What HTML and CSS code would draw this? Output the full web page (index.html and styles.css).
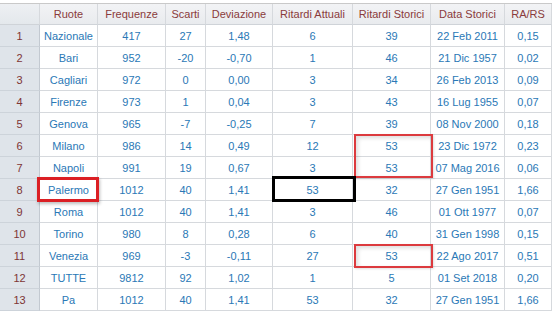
FILE: index.html
```html
<!DOCTYPE html>
<html lang="it">
<head>
<meta charset="utf-8">
<title>Ruote</title>
<link rel="stylesheet" href="styles.css">
</head>
<body>
<div class="wrap">
  <div class="grid">
    <div class="hd corner"></div>
    <div class="hd">Ruote</div>
    <div class="hd">Frequenze</div>
    <div class="hd">Scarti</div>
    <div class="hd">Deviazione</div>
    <div class="hd">Ritardi Attuali</div>
    <div class="hd">Ritardi Storici</div>
    <div class="hd">Data Storici</div>
    <div class="hd">RA/RS</div>

    <div class="rn">1</div><div class="c">Nazionale</div><div class="c">417</div><div class="c">27</div><div class="c">1,48</div><div class="c">6</div><div class="c">39</div><div class="c">22 Feb 2011</div><div class="c">0,15</div>
    <div class="rn">2</div><div class="c">Bari</div><div class="c">952</div><div class="c">-20</div><div class="c">-0,70</div><div class="c">1</div><div class="c">46</div><div class="c">21 Dic 1957</div><div class="c">0,02</div>
    <div class="rn">3</div><div class="c">Cagliari</div><div class="c">972</div><div class="c">0</div><div class="c">0,00</div><div class="c">3</div><div class="c">34</div><div class="c">26 Feb 2013</div><div class="c">0,09</div>
    <div class="rn">4</div><div class="c">Firenze</div><div class="c">973</div><div class="c">1</div><div class="c">0,04</div><div class="c">3</div><div class="c">43</div><div class="c">16 Lug 1955</div><div class="c">0,07</div>
    <div class="rn">5</div><div class="c">Genova</div><div class="c">965</div><div class="c">-7</div><div class="c">-0,25</div><div class="c">7</div><div class="c">39</div><div class="c">08 Nov 2000</div><div class="c">0,18</div>
    <div class="rn">6</div><div class="c">Milano</div><div class="c">986</div><div class="c">14</div><div class="c">0,49</div><div class="c">12</div><div class="c">53</div><div class="c">23 Dic 1972</div><div class="c">0,23</div>
    <div class="rn">7</div><div class="c">Napoli</div><div class="c">991</div><div class="c">19</div><div class="c">0,67</div><div class="c">3</div><div class="c">53</div><div class="c">07 Mag 2016</div><div class="c">0,06</div>
    <div class="rn">8</div><div class="c">Palermo</div><div class="c">1012</div><div class="c">40</div><div class="c">1,41</div><div class="c">53</div><div class="c">32</div><div class="c">27 Gen 1951</div><div class="c">1,66</div>
    <div class="rn">9</div><div class="c">Roma</div><div class="c">1012</div><div class="c">40</div><div class="c">1,41</div><div class="c">3</div><div class="c">46</div><div class="c">01 Ott 1977</div><div class="c">0,07</div>
    <div class="rn">10</div><div class="c">Torino</div><div class="c">980</div><div class="c">8</div><div class="c">0,28</div><div class="c">6</div><div class="c">40</div><div class="c">31 Gen 1998</div><div class="c">0,15</div>
    <div class="rn">11</div><div class="c">Venezia</div><div class="c">969</div><div class="c">-3</div><div class="c">-0,11</div><div class="c">27</div><div class="c">53</div><div class="c">22 Ago 2017</div><div class="c">0,51</div>
    <div class="rn">12</div><div class="c">TUTTE</div><div class="c">9812</div><div class="c">92</div><div class="c">1,02</div><div class="c">1</div><div class="c">5</div><div class="c">01 Set 2018</div><div class="c">0,20</div>
    <div class="rn">13</div><div class="c">Pa</div><div class="c">1012</div><div class="c">40</div><div class="c">1,41</div><div class="c">53</div><div class="c">32</div><div class="c">27 Gen 1951</div><div class="c">1,66</div>
  </div>

  <div class="mark red-thick mark-palermo"></div>
  <div class="mark red-thin mark-storici-a"></div>
  <div class="mark red-thin mark-storici-b"></div>
  <div class="mark black-sel mark-attuali"></div>
</div>
</body>
</html>
```
FILE: styles.css
```css
html, body {
  margin: 0;
  padding: 0;
  background: #ffffff;
}

body {
  font-family: "Liberation Sans", Arial, sans-serif;
  font-size: 11px;
}

.wrap {
  position: relative;
  width: 556px;
  height: 314px;
  padding-top: 3px;
  box-sizing: border-box;
}

.grid {
  display: grid;
  grid-template-columns: 40px 58px 68px 40px 67px 80px 78px 74px 47px;
  grid-template-rows: 21px repeat(13, 22px);
  width: 552px;
  border-top: 1px solid #c9c9c9;
}

.grid > div {
  box-sizing: border-box;
  display: flex;
  align-items: center;
  justify-content: center;
  border-right: 1px solid #d6d9dd;
  border-bottom: 1px solid #d6d9dd;
  white-space: nowrap;
}

.hd {
  background: linear-gradient(#f2f3f5, #e9ebee);
  color: #8a3b3b;
  border-bottom-color: #cfd3d8 !important;
}

.corner {
  background: linear-gradient(#eef0f3, #e4e8ec);
}

.rn {
  background: #dfe4ea;
  color: #7e3535;
  border-right-color: #c3c9d1 !important;
  border-bottom-color: #cdd3da !important;
}

.c {
  background: #ffffff;
  color: #2a78b6;
}

.mark {
  position: absolute;
  box-sizing: border-box;
  pointer-events: none;
}

.red-thick {
  border: 3px solid #db1f24;
  box-shadow: 1px 2px 3px rgba(0, 0, 0, 0.25);
}

.red-thin {
  border: 2px solid #dc3a3e;
  box-shadow: inset 2px 2px 4px rgba(0, 0, 0, 0.14), 1px 1px 2px rgba(0, 0, 0, 0.12);
}

.black-sel {
  border: 3px solid #000000;
}

.mark-palermo {
  left: 37px;
  top: 177px;
  width: 62px;
  height: 25px;
}

.mark-storici-a {
  left: 354px;
  top: 134px;
  width: 79px;
  height: 44px;
}

.mark-storici-b {
  left: 354px;
  top: 244px;
  width: 79px;
  height: 24px;
}

.mark-attuali {
  left: 272px;
  top: 176px;
  width: 84px;
  height: 26px;
}
```
